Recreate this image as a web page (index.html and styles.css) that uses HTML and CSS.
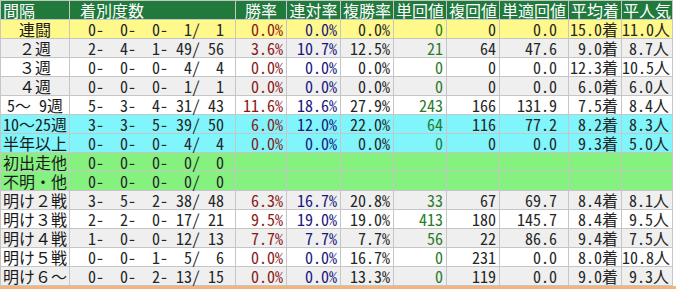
FILE: index.html
```html
<!DOCTYPE html>
<html lang="ja">
<head>
<meta charset="utf-8">
<title>間隔別成績</title>
<link rel="stylesheet" href="styles.css">
</head>
<body>
<table class="tbl">
  <colgroup>
    <col class="w-lbl"><col class="w-cnt"><col class="w-51"><col class="w-54"><col class="w-53"><col class="w-53"><col class="w-53"><col class="w-69"><col class="w-53"><col class="w-51">
  </colgroup>
  <thead>
    <tr class="hd">
      <th class="h-left">間隔</th><th class="h-cnt">着別度数</th><th>勝率</th><th>連対率</th><th>複勝率</th><th>単回値</th><th>複回値</th><th>単適回値</th><th>平均着</th><th>平人気</th>
    </tr>
  </thead>
  <tbody>
    <tr class="yel"><td class="lbl">連闘</td><td class="cnt">  0-  0-  0-  1/  1</td><td class="win">0.0%</td><td class="ren">0.0%</td><td>0.0%</td><td class="tan">0</td><td>0</td><td class="tek">0.0</td><td>15.0着</td><td>11.0人</td></tr>
    <tr class="gry"><td class="lbl">２週</td><td class="cnt">  2-  4-  1- 49/ 56</td><td class="win">3.6%</td><td class="ren">10.7%</td><td>12.5%</td><td class="tan">21</td><td>64</td><td class="tek">47.6</td><td>9.0着</td><td>8.7人</td></tr>
    <tr class="wht"><td class="lbl">３週</td><td class="cnt">  0-  0-  0-  4/  4</td><td class="win">0.0%</td><td class="ren">0.0%</td><td>0.0%</td><td class="tan">0</td><td>0</td><td class="tek">0.0</td><td>12.3着</td><td>10.5人</td></tr>
    <tr class="gry"><td class="lbl">４週</td><td class="cnt">  0-  0-  0-  1/  1</td><td class="win">0.0%</td><td class="ren">0.0%</td><td>0.0%</td><td class="tan">0</td><td>0</td><td class="tek">0.0</td><td>6.0着</td><td>6.0人</td></tr>
    <tr class="wht"><td class="lbl">5～ 9週</td><td class="cnt">  5-  3-  4- 31/ 43</td><td class="win">11.6%</td><td class="ren">18.6%</td><td>27.9%</td><td class="tan">243</td><td>166</td><td class="tek">131.9</td><td>7.5着</td><td>8.4人</td></tr>
    <tr class="cyn"><td class="lbl">10～25週</td><td class="cnt">  3-  3-  5- 39/ 50</td><td class="win">6.0%</td><td class="ren">12.0%</td><td>22.0%</td><td class="tan">64</td><td>116</td><td class="tek">77.2</td><td>8.2着</td><td>8.3人</td></tr>
    <tr class="cyn"><td class="lbl">半年以上</td><td class="cnt">  0-  0-  0-  4/  4</td><td class="win">0.0%</td><td class="ren">0.0%</td><td>0.0%</td><td class="tan">0</td><td>0</td><td class="tek">0.0</td><td>9.3着</td><td>5.0人</td></tr>
    <tr class="grn"><td class="lbl">初出走他</td><td class="cnt">  0-  0-  0-  0/  0</td><td></td><td></td><td></td><td></td><td></td><td></td><td></td><td></td></tr>
    <tr class="grn"><td class="lbl">不明・他</td><td class="cnt">  0-  0-  0-  0/  0</td><td></td><td></td><td></td><td></td><td></td><td></td><td></td><td></td></tr>
    <tr class="gry"><td class="lbl">明け２戦</td><td class="cnt">  3-  5-  2- 38/ 48</td><td class="win">6.3%</td><td class="ren">16.7%</td><td>20.8%</td><td class="tan">33</td><td>67</td><td class="tek">69.7</td><td>8.4着</td><td>8.1人</td></tr>
    <tr class="wht"><td class="lbl">明け３戦</td><td class="cnt">  2-  2-  0- 17/ 21</td><td class="win">9.5%</td><td class="ren">19.0%</td><td>19.0%</td><td class="tan">413</td><td>180</td><td class="tek">145.7</td><td>8.4着</td><td>9.5人</td></tr>
    <tr class="gry"><td class="lbl">明け４戦</td><td class="cnt">  1-  0-  0- 12/ 13</td><td class="win">7.7%</td><td class="ren">7.7%</td><td>7.7%</td><td class="tan">56</td><td>22</td><td class="tek">86.6</td><td>9.4着</td><td>7.5人</td></tr>
    <tr class="wht"><td class="lbl">明け５戦</td><td class="cnt">  0-  0-  1-  5/  6</td><td class="win">0.0%</td><td class="ren">0.0%</td><td>16.7%</td><td class="tan">0</td><td>231</td><td class="tek">0.0</td><td>8.0着</td><td>10.8人</td></tr>
    <tr class="gry"><td class="lbl">明け６～</td><td class="cnt">  0-  0-  2- 13/ 15</td><td class="win">0.0%</td><td class="ren">0.0%</td><td>13.3%</td><td class="tan">0</td><td>119</td><td class="tek">0.0</td><td>9.0着</td><td>9.3人</td></tr>
  </tbody>
</table>
<div class="foot"></div>
</body>
</html>
```

FILE: styles.css
```css
html, body {
  margin: 0;
  padding: 0;
  background: #ffffff;
}

.tbl {
  border-collapse: separate;
  border-spacing: 0;
  table-layout: fixed;
  width: 673px;
  border-left: 1px solid #c6c6c6;
  border-top: 1px solid #c6c6c6;
  font-family: "Noto Sans Mono CJK JP", "Noto Sans CJK JP", "DejaVu Sans Mono", monospace;
  font-size: 16px;
  color: #262626;
}

.w-lbl { width: 69px; }
.w-cnt { width: 166px; }
.w-51 { width: 51px; }
.w-53 { width: 53px; }
.w-54 { width: 54px; }
.w-69 { width: 69px; }

.tbl th,
.tbl td {
  padding: 0 3px 0 0;
  line-height: 18px;
  height: 18px;
  border-right: 1px solid #c6c6c6;
  border-bottom: 1px solid #c6c6c6;
  white-space: pre;
  text-align: right;
  font-weight: normal;
}

.hd th {
  background: #1f7a3c;
  color: #ffffff;
  text-align: center;
  padding: 0;
}

.hd .h-left {
  text-align: left;
  padding-left: 2px;
}

.hd .h-cnt {
  text-align: left;
  padding-left: 10px;
}

.tbl td.lbl {
  text-align: center;
  padding: 0;
  color: #1a1a1a;
}

.tbl td.cnt {
  padding-right: 11px;
}

.tbl td.tek {
  padding-right: 11px;
}

.win { color: #8a1818; }
.ren { color: #181880; }
.tan { color: #2a7a2a; }

.yel td { background: #fff98c; }
.gry td { background: #efefef; }
.wht td { background: #ffffff; }
.cyn td { background: #80f5fc; }
.grn td { background: #85f27f; }

.foot {
  height: 3px;
  background: #f2b47a;
}
```
